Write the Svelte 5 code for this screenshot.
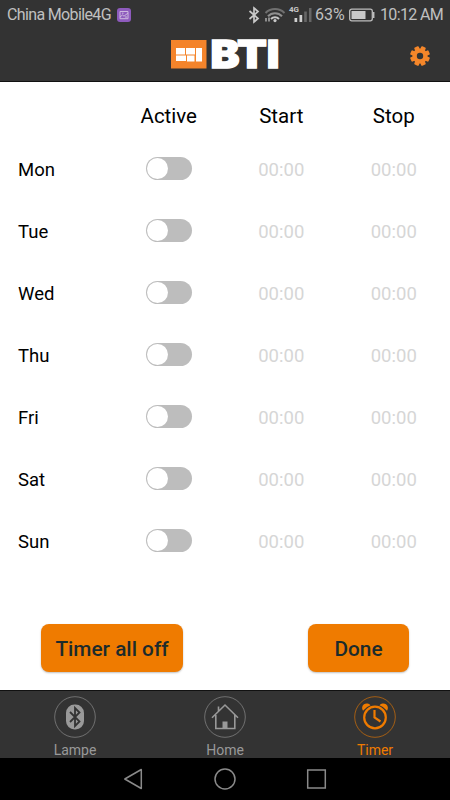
<script>
    let days = $state(
        ["Mon", "Tue", "Wed", "Thu", "Fri", "Sat", "Sun"].map((name) => ({
            name,
            active: false,
            start: "00:00",
            stop: "00:00"
        }))
    );
    let tab = $state("Timer");

    function allOff() {
        for (const day of days) day.active = false;
    }
</script>

<div class="screen">
    <div class="status">
        <span class="carrier">China Mobile4G</span>
        <svg class="badge" width="14" height="14" viewBox="0 0 14 14">
            <rect width="14" height="14" rx="3" fill="#8e5bbd" />
            <path d="M3 3.5h8v7.2H3zM3 9l2.5-2 1.5 1.2L11 5M5 5.2h1.5M8 9h2" fill="none" stroke="#cdb8df" />
        </svg>
        <svg class="signals" width="65" height="28" viewBox="0 0 65 28">
            <path d="M2.500 10l8.500 7.500-4 3.500V7l4 3.500-8.500 7.500" fill="none" stroke="#c8c8c8" stroke-width="1.700" />
            <g fill="none" stroke-width="2">
                <path d="M18.500 12a13.500 13.500 0 0 1 19 0" stroke="#707070" />
                <path d="M21 15.300a9.500 9.500 0 0 1 14 0" stroke="#909090" />
                <path d="M24 18a5.500 5.500 0 0 1 8 0" stroke="#c8c8c8" />
            </g>
            <circle cx="28" cy="19.600" r="1.600" fill="#c8c8c8" />
            <path d="M19 17v3.500M22 20.500v-4" fill="none" stroke="#c8c8c8" stroke-width="1.200" />
            <text x="42" y="10.500" font-size="8" font-weight="700" textLength="10" fill="#c8c8c8">4G</text>
            <path d="M47.500 17h2.700v4h-2.700zM52.500 14h2.700v7h-2.700z" fill="#d0d0d0" />
            <path d="M57.200 10.500h2.600V21h-2.600zM62 7h2.500v14H62z" fill="#666" />
        </svg>
        <span class="percent">63%</span>
        <svg class="battery" width="26" height="14" viewBox="0 0 26 14">
            <rect x=".7" y="1.200" width="22.600" height="11.600" rx="2" fill="none" stroke="#bdbdbd" stroke-width="1.300" />
            <path d="M2.500 3h14v8h-14z" fill="#c8c8c8" />
            <path d="M24.700 4v6" stroke="#bdbdbd" stroke-width="1.500" />
        </svg>
        <span class="clock">10:12 AM</span>
    </div>

    <header>
        <svg class="logo" width="110" height="52" viewBox="0 -10 110 52">
            <rect x="1" y="2" width="35.500" height="28.500" fill="#f4842b" />
            <path d="M6 10h9v6.500H6zM16 10h9v6.500h-9zM26 10h6v13.500h-6zM6 17.500h10v5.500H6zM17 17.500h7.500v6H17z" fill="#fff" />
            <text x="40.500" y="30.200" font-size="38.500" textLength="69" lengthAdjust="spacingAndGlyphs" fill="#fff" stroke="#fff" stroke-width="1.400">BTI</text>
        </svg>
        <button class="settings" aria-label="Settings">
            <svg width="20" height="20" viewBox="-10 -10 20 20">
                {#each [0, 45, 90, 135] as angle}
                    <rect x="-2.400" y="-9.900" width="4.800" height="19.800" rx="1" fill="#f4862a" transform="rotate({angle + 22.5})" />
                {/each}
                <circle r="7.600" fill="#f4862a" />
                <circle r="3.200" fill="#333" />
            </svg>
        </button>
    </header>

    <main>
        <div class="row head">
            <span></span>
            <span>Active</span>
            <span>Start</span>
            <span>Stop</span>
        </div>
        {#each days as day}
            <div class="row">
                <span class="day">{day.name}</span>
                <button
                    class="switch"
                    class:on={day.active}
                    aria-label={day.name}
                    onclick={() => (day.active = !day.active)}
                ></button>
                <span class="time">{day.start}</span>
                <span class="time">{day.stop}</span>
            </div>
        {/each}
        <div class="actions">
            <button class="off" onclick={allOff}>Timer all off</button>
            <button class="done">Done</button>
        </div>
    </main>

    <nav class="tabs">
        <button class:selected={tab == "Lampe"} onclick={() => (tab = "Lampe")}>
            <svg width="42" height="42" viewBox="0 0 42 42">
                <circle class="ring" cx="21" cy="21" r="20.300" />
                <rect x="12" y="8.500" width="18" height="25" rx="8.500" fill="currentColor" />
                <path d="M16 16l9.500 9.500-4.500 4.500V12l4.500 4.500L16 26" fill="none" stroke="#333" stroke-width="1.800" />
            </svg>
            Lampe
        </button>
        <button class:selected={tab == "Home"} onclick={() => (tab = "Home")}>
            <svg width="42" height="42" viewBox="0 0 42 42">
                <circle class="ring" cx="21" cy="21" r="20.300" />
                <path d="M8 21.800L21 9l13 12.800M11.800 19v13.500h19V19M14.500 15v-4.500" fill="none" stroke="currentColor" stroke-width="1.600" />
                <path d="M18.500 25.500h5v7h-5z" fill="currentColor" />
            </svg>
            Home
        </button>
        <button class:selected={tab == "Timer"} onclick={() => (tab = "Timer")}>
            <svg width="42" height="42" viewBox="0 0 42 42">
                <circle class="ring" cx="21" cy="21" r="20.300" />
                <circle cx="21" cy="21.500" r="10.800" fill="none" stroke="currentColor" stroke-width="2.200" />
                <path d="M20.500 14V21.500l6 4" fill="none" stroke="currentColor" stroke-width="2.200" />
                <path d="M9 14.800a4.300 4.300 0 0 1 7.500-5.500q-4.500 1.500-7.500 5.500zM33 14.800a4.300 4.300 0 0 0-7.500-5.500q4.500 1.500 7.500 5.500z" fill="currentColor" />
            </svg>
            Timer
        </button>
    </nav>

    <div class="softkeys">
        <svg width="22" height="22" viewBox="0 0 22 22"><path d="M2.800 11L19.300 1.500v19z" stroke-linejoin="round" /></svg>
        <svg width="22" height="22" viewBox="0 0 22 22"><circle cx="11" cy="11" r="10" /></svg>
        <svg width="22" height="22" viewBox="0 0 22 22"><rect x="1.700" y="2" width="17.600" height="18" /></svg>
    </div>
</div>

<style>
    :global(body) {
        margin: 0;
    }

    .screen {
        width: 450px;
        height: 800px;
        display: flex;
        flex-direction: column;
        background: #fff;
        font-family: Roboto, "Liberation Sans", sans-serif;
        color: #000;
        overflow: hidden;
    }

    button {
        font: inherit;
        border: 0;
        padding: 0;
        background: none;
        cursor: pointer;
    }

    .status {
        height: 28px;
        display: flex;
        align-items: center;
        background: #333;
        color: #c0c0c0;
        font-size: 16px;
        padding: 1px 7px 0 7px;
        box-sizing: border-box;
        white-space: nowrap;
    }

    .carrier {
        width: 105px;
        letter-spacing: -0.640px;
    }

    .badge {
        margin-left: 5px;
    }

    .signals {
        margin-left: auto;
    }

    .percent {
        width: 31px;
        margin-left: 3px;
    }

    .battery {
        margin: 0 5px 0 3px;
    }

    .clock {
        width: 63px;
        letter-spacing: -0.650px;
    }

    header {
        height: 53px;
        display: grid;
        grid-template-columns: 1fr auto 1fr;
        background: #333;
        border-bottom: 1px solid #111;
    }

    .logo {
        grid-column: 2;
        font-family: Inter, sans-serif;
        font-weight: 900;
    }

    .settings {
        justify-self: end;
        width: 20px;
        height: 20px;
        margin: 18px 20px 0 0;
    }

    .settings svg {
        display: block;
    }

    main {
        flex: 1;
        display: flex;
        flex-direction: column;
    }

    .row {
        height: 62px;
        display: grid;
        grid-template-columns: repeat(4, 1fr);
        align-items: center;
        justify-items: center;
        font-size: 18.500px;
    }

    .head {
        height: 56px;
        box-sizing: border-box;
        padding-top: 12px;
        font-size: 20.500px;
    }

    .day,
    .time {
        padding-top: 2px;
    }

    .day {
        justify-self: start;
        padding-left: 18px;
    }

    .time {
        color: #d6d6d6;
    }

    .switch {
        width: 46px;
        height: 23px;
        padding: 1px;
        margin-bottom: 1px;
        border-radius: 12px;
        background: #bdbdbd;
    }

    .switch::before {
        content: "";
        display: block;
        width: 21px;
        height: 21px;
        border-radius: 50%;
        background: #fff;
        transition: 0.2s;
    }

    .switch.on {
        background: #ef7b00;
    }

    .switch.on::before {
        transform: translateX(23px);
    }

    .actions {
        display: flex;
        justify-content: space-between;
        margin-top: auto;
        padding: 0 41px 18px;
    }

    .actions button {
        height: 48px;
        padding-top: 1px;
        border-radius: 8px;
        background: #ef7b00;
        color: #1c2b2b;
        font-size: 20.800px;
        font-weight: 500;
        box-shadow: 0 1px 2px rgba(0, 0, 0, 0.25);
    }

    .actions .off {
        width: 142px;
    }

    .actions .done {
        width: 101px;
    }

    .tabs {
        height: 68px;
        box-sizing: border-box;
        display: flex;
        background: #333;
        border-top: 1px solid #111;
    }

    .tabs button {
        flex: 1;
        display: flex;
        flex-direction: column;
        align-items: center;
        padding-top: 5px;
        color: #999;
        font-size: 14px;
        line-height: 16px;
        gap: 4px;
    }

    .tabs svg {
        flex: none;
    }

    .tabs .selected {
        color: #ef7b00;
    }

    .ring {
        fill: none;
        stroke: currentColor;
        stroke-width: 1;
        opacity: 0.6;
    }

    .softkeys {
        height: 42px;
        display: flex;
        justify-content: center;
        align-items: center;
        gap: 70px;
        background: #000;
    }

    .softkeys svg {
        fill: none;
        stroke: #8a8a8a;
        stroke-width: 1.500;
    }
</style>
